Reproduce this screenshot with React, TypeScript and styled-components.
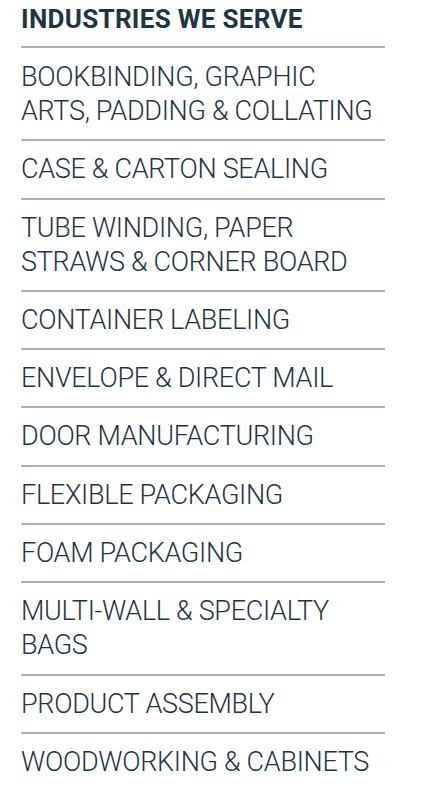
import React from 'react'
import styled, { createGlobalStyle } from 'styled-components'

const GlobalStyle = createGlobalStyle`
  html, body {
    margin: 0;
    padding: 0;
    background: #ffffff;
  }
`

const Wrapper = styled.nav`
  width: 364px;
  padding: 0 0 0 21px;
  font-family: Roboto, "Liberation Sans", sans-serif;
  color: #1d3545;
`

const Title = styled.h2`
  margin: 0;
  padding: 3px 0 11px;
  font-size: 26px;
  line-height: 32px;
  font-weight: 700;
  letter-spacing: 0.3px;
  text-transform: uppercase;
  border-bottom: 2px solid #a9b3b6;
`

const List = styled.ul`
  list-style: none;
  margin: 0;
  padding: 0;
`

const Item = styled.li`
  padding: 11px 0 11.3px;
  font-size: 27px;
  line-height: 34px;
  font-weight: 300;
  letter-spacing: -0.3px;
  text-transform: uppercase;
  border-bottom: 2px solid #a9b3b6;

  &:first-child {
    padding-top: 12px;
  }

  &:last-child {
    border-bottom: none;
  }
`

const industries = [
  'Bookbinding, Graphic Arts, Padding & Collating',
  'Case & Carton Sealing',
  'Tube Winding, Paper Straws & Corner Board',
  'Container Labeling',
  'Envelope & Direct Mail',
  'Door Manufacturing',
  'Flexible Packaging',
  'Foam Packaging',
  'Multi-Wall & Specialty Bags',
  'Product Assembly',
  'Woodworking & Cabinets',
]

const App = () => {
  return (
    <>
      <GlobalStyle />
      <Wrapper>
        <Title>Industries We Serve</Title>
        <List>
          {industries.map(name => (
            <Item key={name}>{name}</Item>
          ))}
        </List>
      </Wrapper>
    </>
  )
}

export default App
